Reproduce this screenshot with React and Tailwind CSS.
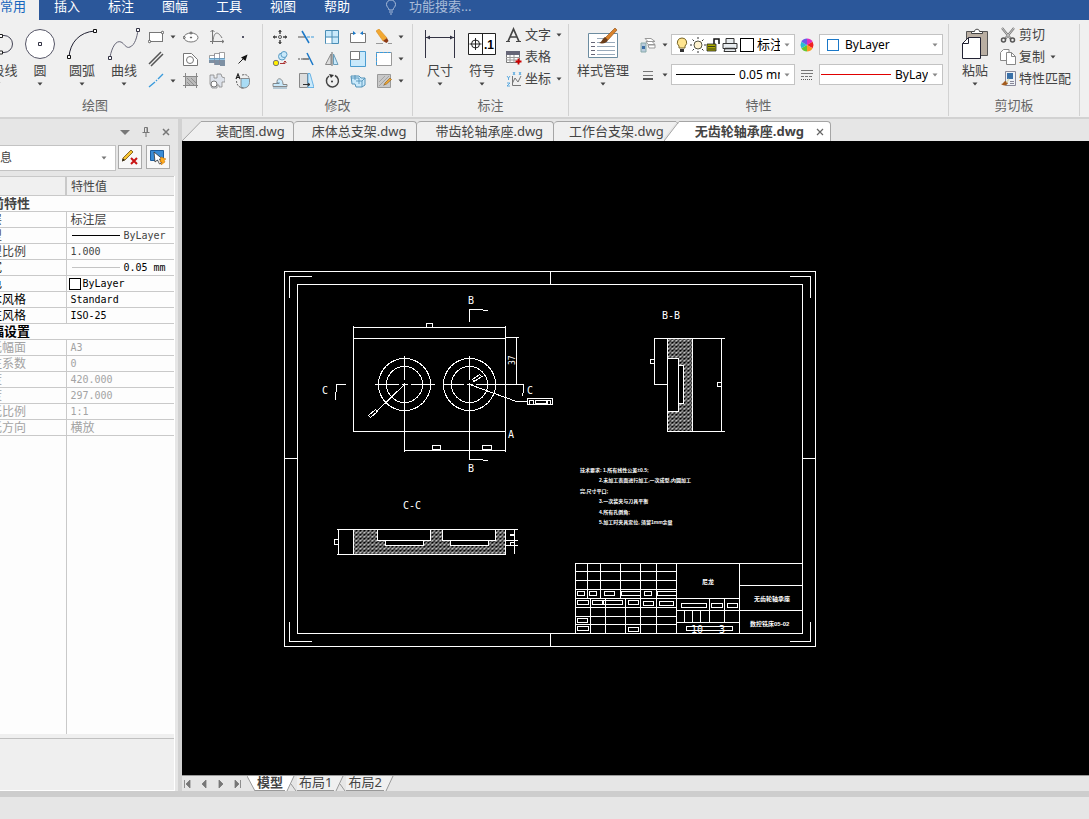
import React from "react";

const menus = ["插入", "标注", "图幅", "工具", "视图", "帮助"];

const Ico = ({ children, className = "w-4 h-4", box = "0 0 16 16" }) => (
  <svg className={`shrink-0 ${className}`} viewBox={box} fill="none" stroke="#555" aria-hidden="true">{children}</svg>
);

const Caret = ({ color = "#444" }) => (
  <svg className="w-1.5 h-1 shrink-0" viewBox="0 0 6 4" aria-hidden="true"><path d="M0.5 0.5h5L3 3.5z" fill={color} /></svg>
);

const BL = "#3a9bdc";
const LB = "#c9e9fb";

/* drawing tools */
const drawTools = [
  { label: "矩形", caret: true, icon: <Ico><rect x="1.5" y="3.5" width="13" height="9" fill="#fff" stroke="#777" /><circle cx="1.5" cy="12.5" r="1.2" fill="#fff" /><circle cx="14.5" cy="3.5" r="1.2" fill="#fff" /></Ico> },
  { label: "椭圆", icon: <Ico><ellipse cx="8" cy="8.500" rx="7" ry="4.500" fill="#fff" stroke="#777" /><circle cx="8" cy="8.500" r=".6" fill="#555" /><circle cx="8" cy="4" r="1" fill="#fff" /><circle cx="1.200" cy="8.500" r="1" fill="#fff" /></Ico> },
  { label: "公式曲线", icon: <Ico><path d="M3.500 1v14M1 12.500h14M1.500 3L3.500 1l2 2M13 11l2 1.500-2 1.500M4 12C5 2 9 2 13 9" stroke="#777" /></Ico> },
  { label: "点", icon: <Ico><path d="M7 7h2v2H7z" fill="#556" stroke="none" /></Ico> },
  { label: "平行线", icon: <Ico><path d="M1 13L13 1M3 15L15 3" stroke="#555" strokeWidth="1.500" /></Ico> },
  { label: "局部放大", icon: <Ico><path d="M.5 2.500h8l6 6v6H.5z" fill="#fff" stroke="#777" /><circle cx="7" cy="9" r="3.500" stroke="#777" /></Ico> },
  { label: "孔轴", icon: <Ico><path d="M.5 4.500h5v-2h5v-1h5v6H.5z" fill="#fff" stroke="#888" strokeWidth=".8" /><path d="M0 9h16v6h-5v-1H6v-2H0z" fill="#7d90a3" stroke="none" /><path d="M5.500 3v11M10.500 2v12" stroke="#889" strokeWidth=".8" /><path d="M0 8h16" stroke={BL} /></Ico> },
  { label: "箭头", icon: <Ico><path d="M3.500 12.500L8 8" stroke="#222" /><path d="M12.500 3.500L10.500 10 6 6.500z" fill="#111" stroke="none" /></Ico> },
  { label: "直线", caret: true, icon: <Ico><path d="M1 14l6-5M8 8l1-1M10 6l5-5" stroke={BL} strokeWidth="1.400" /></Ico> },
  { label: "剖面线", icon: <Ico><path d="M2.500 3.500h11v9h-11z" fill="#bbb" stroke="#777" /><path d="M2.500 0v15M13.500 0v15M0 3.500h15M0 12.500h15" stroke="#888" /><path d="M4 5l7 7M8 5l5 5M4 9l3 3" stroke="#888" strokeWidth=".8" /></Ico> },
  { label: "齿形", icon: <Ico><path d="M1 2h4v3h3V1h4l1 3 3 1v4h-3v5h-3v-2H8v3H3l-2-4z" fill="#dde2ea" stroke="#888" strokeWidth=".8" /><circle cx="5" cy="11" r="3" fill="#fff" stroke="#777" /></Ico> },
  { label: "文字曲线", icon: <Ico><path d="M6 5.500h8.500v4a5.500 5.500 0 01-5.500 5.500H6z" fill="#a9dcf5" stroke="#777" strokeWidth=".8" /><path d="M7 2c4-1 6 0 7 3M1.500 8c0 4 3 7 7 7" stroke="#666" strokeDasharray="2 1" /><path d="M1 6l2-5 2 5M2 4.500h2" stroke="#222" strokeWidth="1.200" /></Ico> },
];

const editTools = [
  { label: "平移", icon: <Ico><path d="M8 1v4M8 11v4M1 8h4M11 8h4" stroke="#444" strokeWidth="1.500" /><path d="M6 3l2-2 2 2zM6 13l2 2 2-2zM3 6L1 8l2 2zM13 6l2 2-2 2z" fill="#444" stroke="none" /><circle cx="8" cy="8" r="1.500" /></Ico> },
  { label: "裁剪", icon: <Ico><path d="M0 8h8" stroke="#555" /><path d="M9 8h7" stroke={BL} strokeDasharray="3 1" /><path d="M4 2l7 12" stroke="#1a78c8" strokeWidth="1.500" /></Ico> },
  { label: "阵列", icon: <Ico><path d="M1.500 1.500h13v13h-13z" fill={LB} stroke="#4a8db5" /><path d="M2 8.500h6v6H2z" fill="#fff" stroke="none" /><path d="M8 1v14M1 8h14" stroke="#4a8db5" /></Ico> },
  { label: "打断", icon: <Ico><path d="M5 4.500H.5v9h15v-9H11" fill="#fff" stroke="#777" /><path d="M3 2l3 2.500L3 6M13 2l-3 2.500L13 6" fill="#1a78c8" stroke="none" /></Ico> },
  { label: "删除", icon: <Ico><path d="M0 2l3-2 8 9-4 3z" fill="#f2a832" stroke="#d88b1d" strokeWidth=".6" /><path d="M7 12l4-3 1.500 3-2 2z" fill="#8c3a16" stroke="none" /><path d="M0 14.500h7M12 14.500h4" stroke="#999" /></Ico> },
  { label: "平移复制", icon: <Ico><circle cx="10" cy="5.500" r="3.500" fill={LB} stroke="#5a9cc4" /><circle cx="12" cy="3.500" r="3" fill={LB} stroke="#5a9cc4" /><circle cx="4" cy="12" r="2.700" fill="#ffee00" stroke="#777" /><path d="M8 12.500h5V10M11.500 11.500L13 10l1.500 1.500" stroke="#a33" /></Ico> },
  { label: "延伸", icon: <Ico><path d="M0 8h5" strokeDasharray="2 1" /><path d="M5 8h6" stroke="#222" /><path d="M9 2l6 12" stroke="#1a78c8" strokeWidth="1.500" /></Ico> },
  { label: "镜像", icon: <Ico><path d="M7 3v10.500H1.500z" fill="#ddd" stroke="#888" /><path d="M9.500 3v10.500H14z" fill={LB} stroke="#6a9cb8" /><path d="M8 1v14" stroke="#666" /></Ico> },
  { label: "缩放", icon: <Ico><path d="M.5 .5h15v15H.5z" fill={LB} stroke="#4a9cd0" /><path d="M.5 .5h9v8h-9z" fill="#fff" stroke="#777" /></Ico> },
  { label: "拉伸", icon: <Ico><path d="M.5 1.500h15v13H.5z" fill="#fff" stroke="#999" /><path d="M.5 14V1.500h14" stroke={BL} strokeDasharray="3 1" /></Ico> },
  { label: "等距线", icon: <Ico><path d="M1 13.500h14v-2h-4c0-7-6-7-6-3 0 1 1 2 2 2H1z" fill={LB} stroke="#888" /><path d="M4 10h4M1 15h14" stroke="#5a8ca8" strokeWidth=".8" /></Ico> },
  { label: "拔模", icon: <Ico><path d="M1.500 .5h8v14h-8z" fill="#ddd" stroke="#888" /><path d="M10 .5h2l4 14h-6z" fill={LB} stroke={BL} strokeWidth=".7" /><path d="M5 11.500h7M10 10l2 1.500-2 1.500" stroke="#333" /></Ico> },
  { label: "旋转", icon: <Ico><path d="M5 3a6 6 0 106-.5" stroke="#444" strokeWidth="1.500" /><path d="M5 1l5 1-3 3z" fill="#333" stroke="none" /><circle cx="8" cy="8.500" r="1" fill="#333" stroke="none" /></Ico> },
  { label: "分解", icon: <Ico><path d="M1 3h8l2 2h4v7l-3 2H6l-1-3H2z" fill={LB} stroke="#5292b8" /><path d="M1 5h8v6M6 8h6v6M12 8l3-3M5 2v5" stroke="#5292b8" strokeWidth=".9" /></Ico> },
  { label: "编辑填充", icon: <Ico><path d="M1.500 1.500h13v13h-13z" fill="#c8c8c8" stroke="#999" /><path d="M3 9l6-6M3 13L13 3M7 13l6-6" stroke="#999" strokeWidth=".8" /><path d="M9 10l5-5 1.500 1.500-5 4.500L8 12z" fill="#f2a832" stroke="#8a5a18" strokeWidth=".6" /></Ico> },
];

const BigButton = ({ label, icon, wide }) => (
  <button type="button" className={`flex flex-col items-center pt-1 shrink-0 ${wide ? "w-15" : "w-[42px]"}`}>
    {icon}
    <span className="leading-5 whitespace-nowrap">{label}</span>
    <span className="flex h-2 items-center"><Caret /></span>
  </button>
);

const RowButton = ({ label, icon, caret }) => (
  <button type="button" className="flex h-[22px] items-center gap-[3px] whitespace-nowrap">
    {icon}
    <span>{label}</span>
    {caret && <span className="ml-0.5 flex"><Caret /></span>}
  </button>
);

const Group = ({ title, className = "", bodyClass = "", children }) => (
  <section className={`flex shrink-0 flex-col border-r border-[#d2d2d2] ${className}`}>
    <div className={`flex h-[68px] ${bodyClass}`}>{children}</div>
    <h2 className="pt-[3px] text-center leading-5 text-[#666]">{title}</h2>
  </section>
);

const Combo = ({ label, value, children, selectClass = "" }) => (
  <div className="flex h-[21px] w-[124px] items-center border border-[#c3c3c3] bg-white pl-1 text-xs text-black">
    {children}
    <select aria-label={label} className={`min-w-0 flex-1 appearance-none overflow-hidden bg-transparent ${selectClass}`}>
      <option>{value}</option>
    </select>
    <span className="flex w-[14px] shrink-0 justify-center"><Caret color="#888" /></span>
  </div>
);

function Ribbon() {
  return (
    <div className="flex h-[99px] shrink-0 border-b-2 border-[#d2d2d2] bg-[#f0f0f0] pt-1 pb-px">
      <Group title="绘图" className="-ml-[72px]" bodyClass="pl-[49px]">
        <BigButton label="多段线" icon={<Ico className="w-8 h-8" box="0 0 32 32"><path d="M2 7.500h20a8.500 8.500 0 010 17h-3" stroke="#445" /><path d="M17.500 6.500h3v3h-3zM17.500 23h3v3h-3z" fill="#fff" stroke="#222" /></Ico>} />
        <BigButton label="圆" icon={<Ico className="w-8 h-8" box="0 0 32 32"><circle cx="16" cy="16" r="14.500" fill="#fff" stroke="#556" /><path d="M14.500 14.500h3v3h-3z" stroke="#334" /></Ico>} />
        <BigButton label="圆弧" icon={<Ico className="w-8 h-8" box="0 0 32 32"><path d="M3 29C4 15 13 4 29 3" stroke="#223" /><path d="M1.500 27.500h3v3h-3zM27.500 1.500h3v3h-3z" fill="#fff" stroke="#111" /></Ico>} />
        <BigButton label="曲线" icon={<Ico className="w-8 h-8" box="0 0 32 32"><path d="M2 29c2-10 6-17 11-15 3 1 5 7 9 5 5-2 7-10 8-17" stroke="#667" /><path d="M.5 28.500h3v3h-3zM28.500.5h3v3h-3z" fill="#fff" stroke="#334" /></Ico>} />
        <div className="grid h-[68px] grid-cols-[35px_26px_26px_27px] grid-rows-[22px_22px_22px] content-end items-center pl-[3px]">
          {drawTools.map((t) => (
            <button key={t.label} type="button" aria-label={t.label} className="flex items-center gap-1.5">{t.icon}{t.caret && <Caret />}</button>
          ))}
        </div>
      </Group>

      <Group title="修改" bodyClass="pr-2 pl-[9px]">
        <div className="grid h-[68px] grid-cols-[26px_26px_26px_26px_28px] grid-rows-[22px_22px_22px] content-end items-center">
          {editTools.map((t, i) => (
            <button key={t.label} type="button" aria-label={t.label} className="flex items-center gap-1.5">{t.icon}{i % 5 === 4 && <Caret />}</button>
          ))}
        </div>
      </Group>

      <Group title="标注" bodyClass="pr-1.5 pl-1.5">
        <BigButton label="尺寸" icon={<Ico className="w-8 h-8" box="0 0 32 32"><path d="M1.500 2v28M30.500 2v28M2 9.500h28" stroke="#334" /><path d="M2 9.500l4-2v4zM30 9.500l-4-2v4z" fill="#334" stroke="none" /></Ico>} />
        <BigButton label="符号" icon={
          <svg className="h-8 w-8" viewBox="0 0 32 32" fill="none" stroke="#222" aria-hidden="true">
            <path d="M2.500 5.500h27v21h-27zM16.500 5.500v21" fill="#fff" /><circle cx="9.500" cy="16" r="4" /><path d="M3.500 16h12M9.500 10v12" />
            <text x="18" y="21" fontSize="12" fontWeight="700" fill="#000" stroke="none" fontFamily="Liberation Sans, sans-serif">.1</text>
          </svg>
        } />
        <div className="pl-[3px]">
          <RowButton label="文字" caret icon={<Ico><path d="M2 14.500L7.500 2l5.500 12.500M4 10h7" stroke="#444" strokeWidth="1.700" /><path d="M0 14.500h4M10 14.500h5" stroke="#444" /></Ico>} />
          <RowButton label="表格" icon={<Ico><path d="M.5 2.500h13v11H.5z" fill="#fff" stroke="#777" /><path d="M0 2h14v4H0z" fill="#667" stroke="none" /><path d="M0 8.500h14M0 11h14M4 6v8M8 6v8" stroke="#999" /><path d="M12.500 9.500v6M9.500 12.500h6" stroke="#c00" strokeWidth="1.800" /></Ico>} />
          <RowButton label="坐标" caret icon={<Ico><path d="M6.500 5v9.500H15M6.500 12L9 7l3 4 3-6" stroke="#777" /><path d="M1 5l1.500 2L4 5M2.500 7v2M7 1l2 3M9 1L7 4M13 1l2 3M15 1l-2 3M1 12h3l-3 3h3" stroke={BL} strokeWidth=".8" /></Ico>} />
        </div>
      </Group>

      <Group title="特性" bodyClass="pr-[5px] pl-1">
        <BigButton wide label="样式管理" icon={
          <Ico className="w-8 h-8" box="0 0 32 32">
            <path d="M1.500 5.500h29v24h-29z" fill="#fff" stroke="#6c8ca0" />
            <path d="M4 14.500h4M4 18.500h4M4 22.500h4M4 26.500h4" stroke="#667" /><path d="M10 10.500h8M10 14.500h18M10 18.500h18M10 22.500h18M10 26.500h18" stroke="#9ab" />
            <path d="M28 0l2 2-9 10-3-2z" fill="#d9822b" stroke="#8a4a12" strokeWidth=".6" /><path d="M18 9l3 3c-1 3-5 4-9 3 3-1 3-4 6-6z" fill="#6b3d1a" stroke="none" />
          </Ico>
        } />
        <div className="flex flex-col gap-[9px] pt-[10px] pl-[7px]">
          <div className="flex h-[21px] items-center">
            <button type="button" aria-label="图层" className="flex w-[31px] items-center gap-1.5">
              <Ico><path d="M1 6h5v9H1z" fill="#b9cbdc" stroke="#8aa" /><path d="M2 9h3v3H2z" fill="#3c6ea5" stroke="none" /><path d="M5 1.500h6l4 3H8zM6 4.500h6l3 3H8zM8 8h7v3H9z" fill="#fff" stroke="#999" /></Ico><Caret />
            </button>
            <Combo label="当前图层" value="标注层" selectClass="text-[13px]">
              <Ico className="w-3 h-4" box="0 0 12 16"><path d="M6 1a4.500 4.500 0 00-3 8v2h6V9a4.500 4.500 0 00-3-8z" fill="#ffe590" stroke="#776528" /><path d="M4 12h4v3H4z" fill="#333" stroke="none" /></Ico>
              <Ico className="ml-0.5 w-4 h-4"><circle cx="8" cy="8" r="4" fill="#fff3cf" stroke="#554" /><path d="M8 0v2M8 14v2M0 8h2M14 8h2M2.500 2.500l1.500 1.500M12 12l1.500 1.500M2.500 13.500L4 12M12 4l1.500-1.500" stroke="#333" /></Ico>
              <Ico className="w-3.5 h-4" box="0 0 14 16"><path d="M8 7V2h5v5" stroke="#111" strokeWidth="1.500" /><path d="M1 7h9v7H1z" fill="#a8a800" stroke="#222" strokeWidth=".8" /><path d="M2 9.500h7M2 12h7" stroke="#222" strokeWidth=".8" /></Ico>
              <Ico className="ml-0.5 w-4 h-4"><path d="M4 1.500h8v5H4zM1 6.500h14v5H1zM3 11.500h10l1 3H2z" fill="#e8ecef" stroke="#333" /><path d="M3 11.500h10" stroke="#333" strokeWidth="1.500" /></Ico>
              <span className="ml-0.5 mr-[3px] h-3.5 w-3.5 shrink-0 border border-black bg-white" />
            </Combo>
            <button type="button" aria-label="颜色" className="mx-[3px] flex w-[18px] justify-center">
              <Ico>
                <g stroke="none"><path d="M8 8V1.500a6.500 6.500 0 015.600 3.300z" fill="#e02dc0" /><path d="M8 8l5.600-3.200a6.500 6.500 0 010 6.400z" fill="#f02020" /><path d="M8 8l5.600 3.200A6.500 6.500 0 018 14.500z" fill="#ff9a1f" /><path d="M8 8v6.500a6.500 6.500 0 01-5.600-3.300z" fill="#65c832" /><path d="M8 8l-5.600 3.200a6.500 6.500 0 010-6.400z" fill="#29bed0" /><path d="M8 8L2.400 4.800A6.500 6.500 0 018 1.500z" fill="#675be8" /></g>
              </Ico>
            </button>
            <Combo label="当前颜色" value="ByLayer">
              <span className="ml-[3px] mr-1.5 h-3 w-3 shrink-0 border border-[#1a78c8]" />
            </Combo>
          </div>
          <div className="flex h-[21px] items-center">
            <button type="button" aria-label="线宽设置" className="flex w-[31px] items-center gap-1.5">
              <Ico><path d="M3 4.500h10M3 8.500h10" stroke="#777" /><path d="M3 12h10" stroke="#555" strokeWidth="2" /></Ico><Caret />
            </button>
            <Combo label="线宽" value="0.05 mm">
              <span className="mr-1 h-px w-[59px] shrink-0 bg-black" />
            </Combo>
            <button type="button" aria-label="线型设置" className="mx-[3px] flex w-[18px] justify-center">
              <Ico><path d="M2 3.500h12M2 6.500h12" stroke="#777" /><path d="M2 9.500h12" strokeDasharray="3 1" stroke="#777" /><path d="M2 12.500h12" strokeDasharray="1 1" /></Ico>
            </button>
            <Combo label="线型" value="ByLayer">
              <span className="-ml-[3px] mr-1 h-px w-[70px] shrink-0 bg-[#e00000]" />
            </Combo>
          </div>
        </div>
      </Group>

      <Group title="剪切板" bodyClass="pr-2 pl-[5px]">
        <BigButton label="粘贴" icon={<Ico className="w-8 h-8" box="0 0 32 32"><path d="M7.500 3.500h21v24h-21z" fill="#b9aea2" stroke="#555" /><path d="M12.500 5.500v-2h3c0-3 5-3 5 0h3v2z" fill="#fff" stroke="#444" /><path d="M3.500 15.500l6-6h12v21h-18z" fill="#fff" stroke="#223" /><path d="M3.500 15.500h6v-6" stroke="#223" /></Ico>} />
        <div className="pl-1">
          <RowButton label="剪切" icon={<Ico><path d="M2 1l9 11M14 1L5 12" stroke="#777" strokeWidth="2.200" /><path d="M2 1l9 11M14 1L5 12" stroke="#eee" strokeWidth=".7" /><circle cx="3.500" cy="13" r="2" strokeWidth="1.500" /><circle cx="12.500" cy="13" r="2" strokeWidth="1.500" /></Ico>} />
          <RowButton label="复制" caret icon={<Ico><path d="M.5 3.500l3-3H9v11H.5z" fill="#fff" stroke="#888" /><path d="M6.500 3.500h5l4 4v8h-9z" fill="#fff" stroke="#888" /><path d="M11.500 3.500v4h4" stroke="#888" /></Ico>} />
          <RowButton label="特性匹配" icon={<Ico><path d="M5.500.5h10v14h-10z" fill="#eef2f6" stroke="#889" /><path d="M7 2h6v6H7z" fill="#3970a8" stroke="none" /><path d="M10 10.500h4M10 12.500h4" stroke="#889" /><path d="M1 13c3 0 2-3 5-3l2 2c-1 3-5 3-7 1z" fill="#a35c1e" stroke="none" /><path d="M6.500 11.500L9 8" stroke="#ddb" strokeWidth="1.500" /></Ico>} />
        </div>
      </Group>
    </div>
  );
}

/* property palette */
const currentProps = [
  { name: "图层", value: "标注层", cjk: true },
  { name: "线型", value: "ByLayer", line: "bg-black" },
  { name: "线型比例", value: "1.000" },
  { name: "线宽", value: "0.05 mm", line: "bg-[#c4c4c4]", dark: true },
  { name: "颜色", value: "ByLayer", swatch: true, dark: true },
  { name: "文本风格", value: "Standard", dark: true },
  { name: "标注风格", value: "ISO-25", dark: true },
];

const sheetProps = [
  { name: "图纸幅面", value: "A3" },
  { name: "标注系数", value: "0" },
  { name: "宽度", value: "420.000" },
  { name: "高度", value: "297.000" },
  { name: "图纸比例", value: "1:1" },
  { name: "图纸方向", value: "横放", cjk: true },
];

const PropRow = ({ p, muted }) => (
  <tr className={`h-4 border-b border-[#c9c9c9] ${muted ? "text-[#a3a3a3]" : p.dark ? "text-black" : "text-[#444]"}`}>
    <th scope="row" className="border-r border-[#c9c9c9] p-0 text-left leading-[15px] font-normal whitespace-nowrap">{p.name}</th>
    <td className="p-0 pl-1">
      <span className={`flex h-[15px] items-center leading-[15px] whitespace-nowrap ${p.cjk ? "" : "font-['DejaVu_Sans_Mono','Noto_Sans_CJK_SC',monospace] text-[10px]"}`}>
        {p.line && <i className={`mr-1 ml-px h-px w-12 ${p.line}`} />}
        {p.swatch && <i className="-ml-0.5 mr-0.5 h-3 w-3 border border-black bg-white" />}
        {p.value}
      </span>
    </td>
  </tr>
);

function PropertyPanel() {
  return (
    <aside className="-ml-[22px] flex w-[204px] shrink-0 flex-col border-r-4 border-[#d2d2d2] bg-[#e6e6e6]">
      <div className="flex h-[26px] items-center justify-end gap-3 pr-2">
        <button type="button" aria-label="菜单"><Ico className="w-2.5 h-2" box="0 0 10 8"><path d="M0 2h10L5 7z" fill="#777" stroke="none" /></Ico></button>
        <button type="button" aria-label="固定"><Ico className="w-2 h-2.5" box="0 0 8 10"><path d="M.5 5.500h7M2.500 5V.5h3V5M5 1v4M4 6v4" stroke="#777" /></Ico></button>
        <button type="button" aria-label="关闭"><Ico className="w-2 h-2" box="0 0 8 8"><path d="M1 1l6 6M7 1L1 7" stroke="#777" strokeWidth="1.500" /></Ico></button>
      </div>
      <div className="flex h-[29px] shrink-0 items-start gap-1">
        <div className="flex h-[26px] w-[138px] shrink-0 items-center border border-[#c3c3c3] bg-white pr-2">
          <select aria-label="选择集" className="min-w-0 flex-1 appearance-none bg-transparent pl-[9px] text-xs"><option>信息</option></select>
          <Caret color="#777" />
        </div>
        <button type="button" aria-label="清除选择" className="-ml-0.5 flex h-6 w-6 items-center justify-center border border-[#aaa] bg-[#f8f8f8]">
          <Ico><path d="M1 9l8-8 2 2-8 8-3 1z" fill="#f6c431" stroke="#6b4a10" strokeWidth=".8" /><path d="M0 12.500l1-3 2 1.500z" fill="#222" stroke="none" /><path d="M9 9l6 6M15 9l-6 6" stroke="#c81414" strokeWidth="2" /></Ico>
        </button>
        <button type="button" aria-label="快速选择" className="flex h-6 w-6 items-center justify-center border border-[#aaa] bg-[#f8f8f8]">
          <Ico><path d="M.5 1.500h13v10H.5z" fill="#3a8cd6" stroke="#1c5c9c" /><path d="M4 3l1 10 2.500-2 2 4 2-1-2-4h3z" fill="#fff" stroke="#333" strokeWidth=".8" /><path d="M11 8l5 2-2 1 1 2-4 3 1-3h-2z" fill="#ffac1f" stroke="#c26b00" strokeWidth=".5" /></Ico>
        </button>
      </div>
      <div className="mt-0.5 mr-[3px] flex flex-1 flex-col border-r border-white bg-[#fdfdfd] text-xs">
        <table className="w-full table-fixed border-collapse border-t border-[#c9c9c9]">
          <colgroup><col className="w-[88px]" /><col /></colgroup>
          <thead>
            <tr className="h-[19px] border-b border-[#c9c9c9] bg-[#f0f0f0]">
              <th className="border-r-2 border-[#c9c9c9] p-0" aria-label="特性名" />
              <th className="p-0 pl-1 text-left leading-[17px] font-normal">特性值</th>
            </tr>
          </thead>
          <tbody>
            <tr className="h-4 border-b border-[#c9c9c9]"><th colSpan={2} className="p-0 text-left text-[13px] leading-[15px] font-bold">当前特性</th></tr>
            {currentProps.map((p) => <PropRow key={p.name} p={p} />)}
            <tr className="h-4 border-b border-[#c9c9c9]"><th colSpan={2} className="p-0 text-left text-[13px] leading-[15px] font-bold text-black">图幅设置</th></tr>
            {sheetProps.map((p) => <PropRow key={p.name} p={p} muted />)}
          </tbody>
        </table>
        <div className="w-[89px] flex-1 border-r border-[#c9c9c9]" />
        <div className="h-[57px] shrink-0 border-b border-white bg-[#efefef] pt-1"><hr className="border-[#c0c0c0]" /></div>
      </div>
    </aside>
  );
}

/* sheet geometry, one box per [x, y, w, h] */
const boxes = [
  [426, 323, 6, 4], [432, 445, 8, 4], [482, 445, 9, 4],
  [527, 398, 25, 6], [529, 400, 4, 4], [535, 400, 11, 3], [547, 400, 3, 4],
  [650, 359, 4, 4], [717, 382, 4, 4], [334, 539, 4, 5], [510, 542, 4, 3], [510, 534, 4, 1],
  [577, 591, 7, 4], [589, 591, 7, 4], [604, 591, 10, 4], [621, 591, 19, 4], [644, 591, 7, 4], [657, 591, 19, 4],
  [577, 600, 11, 4], [592, 600, 11, 4], [602, 600, 20, 4], [628, 600, 10, 4], [643, 601, 10, 4], [659, 601, 14, 4],
  [577, 618, 10, 4], [577, 626, 11, 4], [628, 627, 10, 4],
  [681, 603, 25, 4], [711, 603, 11, 4], [727, 603, 10, 4], [686, 626, 46, 4],
];

const notes = [
  [580, 472, "技术要求: 1.所有线性公差±0.5;"],
  [599, 482, "2.未加工表面进行加工,一次成型,内圆加工"],
  [580, 493, "完,尺寸平口;"],
  [599, 503, "3.一次装夹与刀具平衡"],
  [599, 514, "4.所有孔倒角;"],
  [599, 524, "5.加工时夹具定位, 须留1mm余量"],
];

const marks = [
  [468, 304, "B"], [468, 472, "B"], [322, 394, "C"], [527, 394, "C"], [508, 438, "A"],
  [403, 509, "C-C"], [662, 319, "B-B"],
];

function Sheet() {
  return (
    <svg className="h-[634px] w-[907px] shrink-0" viewBox="182 141 907 634" role="img" aria-label="无齿轮轴承座.dwg">
      <defs>
        <pattern id="hatch" width="4" height="4" patternUnits="userSpaceOnUse">
          <path d="M0 3h1v1H0zM1 2h1v1H1zM2 1h1v1H2zM3 0h1v1H3zM0 0h1v1H0zM2 3h1v1H2z" fill="#fff" stroke="none" shapeRendering="crispEdges" />
        </pattern>
      </defs>
      <g transform="translate(.5 .5)" fill="none" stroke="#fff" shapeRendering="crispEdges">
        {/* frame */}
        <path d="M284 271h531v375H284zM297 284h505v349H297z" />
        <path d="M289 297v-21h22M789 276h21v21M289 621v20h22M789 641h21v-20M550 271v13M550 633v13M284 458h13M802 458h13" />
        {/* plan view */}
        <path d="M353 325v106h152M353 338h152M353 327h152M505 325v126M404 450h101" />
        <circle cx="404" cy="384" r="26" /><circle cx="404" cy="384" r="18" />
        <circle cx="469" cy="384" r="26" /><circle cx="469" cy="384" r="18" />
        <path d="M404 355v24M404 382v69M374 384h24M401 384h6M410 384h24M469 355v24M469 382v77M443 384h20M466 384h6M475 384h48v6l-1 6" />
        <path d="M469 321v-12h13l1 1h4M469 459h13l1 1h4M335 400l1-16h9M505 337h13M516 337v47" />
        <path d="M404 384l-28 27M469 384l47 17h11M473 381l10-6" />
        <path d="M368 415l7-6 2 2-7 6zM472 379l7-5 2 2-7 5z" />
        {/* section C-C */}
        <path d="M336 529h181M336 554h169M338 529v25M514 529v24M505 540h12M505 545h12" />
        <path d="M353 529h24v11h8v5h38v-5h7v-11h12v11h8v5h38v-5h7v-11h10v25H353z" fill="url(#hatch)" />
        <path d="M377 540h53M442 540h53" />
        {/* section B-B */}
        <path d="M653 338h71M667 431h57M654 338v46M653 384h14M721 338v93M667 358v53" />
        <path d="M667 338h25v93h-25v-20h11v-8h5v-38h-5v-7h-11z" fill="url(#hatch)" />
        <path d="M678 358v53" />
        {/* title block */}
        <path d="M575 633v-70h227M575 571h101M575 580h101M575 589h101M575 598h164M575 607h101M575 616h101M575 624h101" />
        <path d="M587 563v35M600 563v35M620 563v35M640 563v70M656 563v70M590 598v35M605 598v35M625 598v35M676 563v70M739 563v70" />
        <path d="M676 610h63M676 622h63M709 598v24M724 598v24M684 610v12M692 610v12M700 610v12M739 585h63M739 610h63" />
        {boxes.map(([x, y, w, h], i) => <rect key={i} x={x} y={y} width={w} height={h} />)}
      </g>
      <g fill="#fff" fontFamily="'DejaVu Sans Mono', 'Noto Sans CJK SC', monospace" fontSize="10">
        {marks.map(([x, y, s]) => <text key={`${x}-${y}`} x={x} y={y}>{s}</text>)}
        <text x="691" y="633">10</text>
        <text x="719" y="633">3</text>
        <text transform="rotate(-90 515 365)" x="515" y="365" fontSize="8">37</text>
      </g>
      <g fill="#fff" fontFamily="'Liberation Sans', 'Noto Sans CJK SC', sans-serif" fontSize="5" fontWeight="700">
        {notes.map(([x, y, s]) => <text key={y} x={x} y={y}>{s}</text>)}
        <text x="702" y="584" fontSize="6">尼龙</text>
        <text x="754" y="601" fontSize="6">无齿轮轴承座</text>
        <text x="750" y="626" fontSize="6">数控铣床05-02</text>
      </g>
    </svg>
  );
}

const docs = ["床体总支架.dwg", "带齿轮轴承座.dwg"];
const docTab = "h-5 border-t border-[#a5a5a5] bg-[#f0f0f0] pb-0.5 leading-4 whitespace-nowrap";

function DocTabs() {
  return (
    <div className="flex h-[22px] items-end bg-[#e6e6e6]" role="tablist">
      <svg className="h-5 w-5 shrink-0" viewBox="0 0 20 20"><path d="M0 20L19 .5h1V20z" fill="#f0f0f0" /><path d="M0 20L19 .5h1" fill="none" stroke="#a5a5a5" /></svg>
      <button type="button" role="tab" className={`${docTab} rounded-tr border-r pr-2 pl-3.5`}>装配图.dwg</button>
      {docs.map((d) => <button key={d} type="button" role="tab" className={`${docTab} rounded-t border-r pr-2.5 pl-[18px]`}>{d}</button>)}
      <button type="button" role="tab" className={`${docTab} rounded-tl pl-[15px]`}>工作台支架.dwg</button>
      <svg className="h-5 w-4 shrink-0" viewBox="0 0 16 20"><path d="M0 .5h13l-13 16z" fill="#f0f0f0" /><path d="M0 20L15 .5h1V20z" fill="#fff" /><path d="M0 .5h12l2 2M0 20L15 .5h1" fill="none" stroke="#a5a5a5" /></svg>
      <div className="flex h-5 items-center gap-3 rounded-tr border-t border-r border-[#a5a5a5] bg-white pr-1.5 pl-[15px]">
        <button type="button" role="tab" aria-selected="true" className="pb-0.5 leading-4 font-bold whitespace-nowrap">无齿轮轴承座.dwg</button>
        <button type="button" aria-label="关闭标签"><Ico className="w-2 h-2" box="0 0 8 8"><path d="M1 1l6 6M7 1L1 7" stroke="#666" strokeWidth="1.200" /></Ico></button>
      </div>
    </div>
  );
}

const navPaths = ["M2.500 1v8M8 1v8L4 5z", "M7 1v8L3 5z", "M3 1v8l4-4z", "M2 1v8l4-4zM7.500 1v8"];
const navLabels = ["第一页", "上一页", "下一页", "最后一页"];

function LayoutTabs() {
  return (
    <div className="flex h-4 shrink-0 border-t border-[#999] bg-[#e6e6e6] leading-3">
      <div className="flex items-center gap-[7px] pr-1">
        {navPaths.map((d, i) => (
          <button key={navLabels[i]} type="button" aria-label={navLabels[i]}><Ico className="w-2.5 h-2.5" box="0 0 10 10"><path d={d} fill="#777" stroke="#777" strokeWidth=".8" /></Ico></button>
        ))}
      </div>
      <Ico className="h-[15px] w-2" box="0 0 8 15"><path d="M0 0l8 15V0z" fill="#fff" stroke="none" /><path d="M0 0l8 15" stroke="#999" /></Ico>
      <button type="button" className="border-b border-[#999] bg-white px-0.5 pb-0.5 font-bold whitespace-nowrap">模型</button>
      <Ico className="h-[15px] w-3" box="0 0 12 15"><path d="M0 0h9L2 15H0z" fill="#fff" stroke="none" /><path d="M9 0L2 15M6 8l5 7" stroke="#999" /></Ico>
      <button type="button" className="border-b border-[#999] bg-[#f0f0f0] px-0.5 pb-0.5 whitespace-nowrap">布局1</button>
      <Ico className="h-[15px] w-3" box="0 0 12 15"><path d="M0 0h9L2 15H0z" fill="#f0f0f0" stroke="none" /><path d="M9 0L2 15M6 8l5 7" stroke="#999" /></Ico>
      <button type="button" className="border-b border-[#999] bg-[#f0f0f0] px-0.5 pb-0.5 whitespace-nowrap">布局2</button>
      <Ico className="h-[15px] w-2.5" box="0 0 10 15"><path d="M0 0h9L2 15H0z" fill="#f0f0f0" stroke="none" /><path d="M9 0L2 15" stroke="#999" /></Ico>
    </div>
  );
}

export default function App() {
  return (
    <div className="flex min-h-screen flex-col overflow-hidden bg-[#e6e6e6] font-['Noto_Sans','Noto_Sans_CJK_SC',sans-serif] text-[13px] text-[#444]">
      <header className="-mt-2 flex h-7 shrink-0 items-stretch bg-[#2b579a] text-white">
        <nav className="-ml-[15px] flex">
          <button type="button" className="w-[54px] bg-[#f0f0f0] pt-0.5 pl-0.5 text-[#1766bd]">常用</button>
          {menus.map((m) => <button key={m} type="button" className="w-[54px] pt-0.5 pl-0.5">{m}</button>)}
        </nav>
        <label className="flex items-center gap-3 pt-0.5 pl-[22px]">
          <Ico className="w-3 h-4" box="0 0 12 16"><path d="M4 11c0-2-2.500-3-2.500-5.500a4.500 4.500 0 019 0C10.500 8 8 9 8 11zM4 13h4M5 15h2" stroke="#a9bcd9" /></Ico>
          <input aria-label="功能搜索" placeholder="功能搜索..." className="w-32 bg-transparent placeholder:text-[#a9bcd9]" />
        </label>
      </header>
      <Ribbon />
      <div className="flex flex-1">
        <PropertyPanel />
        <main className="flex min-w-0 flex-1 flex-col">
          <DocTabs />
          <div className="flex flex-1 overflow-hidden bg-black"><Sheet /></div>
          <LayoutTabs />
        </main>
      </div>
      <footer className="h-7 shrink-0 border-t-[6px] border-[#cdcdcd]" />
    </div>
  );
}
